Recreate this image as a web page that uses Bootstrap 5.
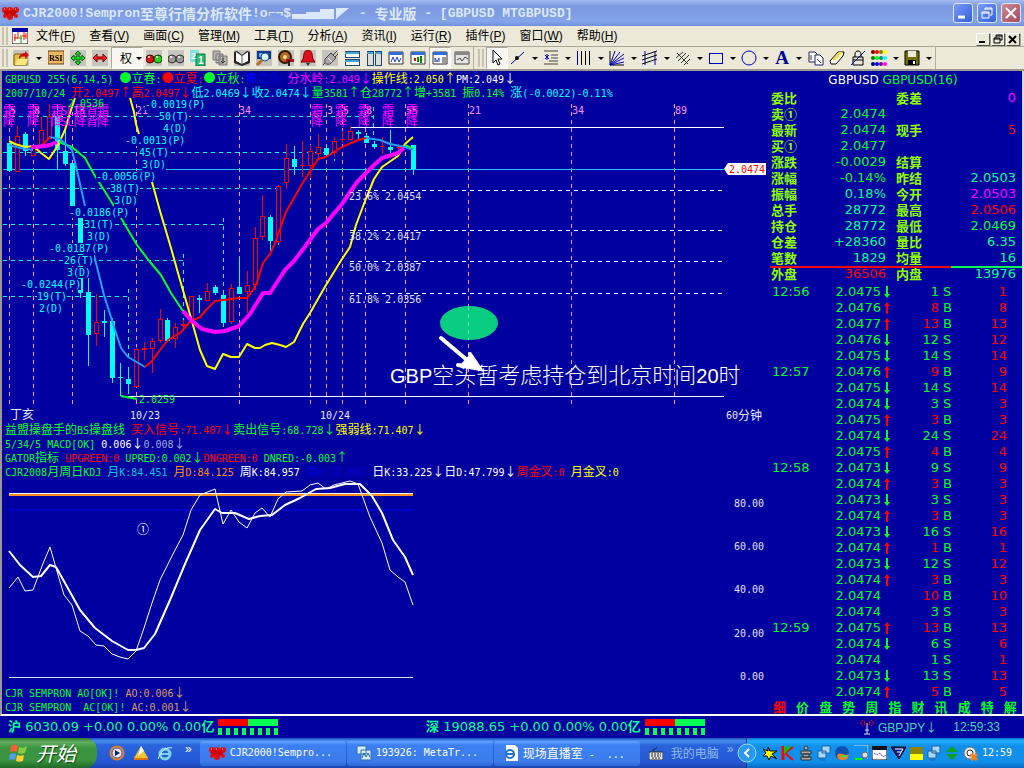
<!DOCTYPE html>
<html lang="zh-CN">
<head>
<meta charset="utf-8">
<meta name="viewport" content="width=device-width, initial-scale=1">
<title>CJR2000!Sempron - 专业版 - [GBPUSD MTGBPUSD]</title>
<link href="https://cdn.jsdelivr.net/npm/bootstrap@5.3.0/dist/css/bootstrap.min.css" rel="stylesheet">
<style>
:root{--navy:#0000a0;--face:#ece9d8;--lime:#00ff28;--leaf:#8cff00;--mint:#00ff8c;--hot:#ff0000;--pink:#ff00ff;--aqua:#00ffff}
body{font-family:"Liberation Sans","Noto Sans CJK SC",sans-serif;font-size:12px;line-height:14px;color:#000;background:var(--navy);min-height:100vh}
svg{display:block;flex-shrink:0}
button{padding:0;border:0;background:transparent;color:inherit;line-height:1}
.titlebar{height:26px;background:linear-gradient(#a4bcf0,#7b98e0 6px,#7f9de4 15px,#85a5ea 21px,#7090dc);color:#dce8fc;padding:0 3px 0 2px}
.titlebar h1{font:bold 13px "Liberation Mono","Noto Sans CJK SC",monospace;white-space:pre}
.titlebar .hz{font-size:14px}
.winbtn{width:20px;height:20px;border:1px solid #dfe8fb;border-radius:3px;background:linear-gradient(135deg,#7a9cf4,#2f5fe0)}
.winbtn.shut{background:linear-gradient(135deg,#d08a94,#a44a60)}
.menubar{height:21px;background:var(--face);padding-left:2px;border-bottom:1px solid #aca899}
.menubar a{color:#000;text-decoration:none;font-size:12px;line-height:16px;white-space:nowrap}
.grip{width:6px;height:18px;border-left:2px solid #c6c3b4;border-right:2px solid #c6c3b4}
.mdibtn{width:14px;height:13px;background:var(--face);border:1px solid;border-color:#fff #55534a #55534a #fff;box-shadow:1px 1px 0 #aca899}
.toolbar{height:24px;background:var(--face);border-bottom:2px solid #9c9a8e;padding-left:2px;gap:0}
.toolbar .grip{margin-right:2px}
.tool{width:22px;height:22px;display:flex;align-items:center;justify-content:center;flex-shrink:0}
.tool svg.gr{background:#c4c3bd}
.held{background:#f8f7f2;border:1px solid;border-color:#aca899 #fff #fff #aca899}
.draw{width:20px}
.drop{width:13px;height:22px;display:flex;align-items:center;justify-content:center;flex-shrink:0}
.drop::after{content:"";border:3px solid transparent;border-top-color:#000;border-bottom:0}
.work{border-left:2px solid #9c9a8e;border-bottom:2px solid #fff;color:var(--lime)}
.chart{min-width:0}
.mono{font-family:"DejaVu Sans Mono",monospace;font-size:10px;line-height:14px;height:14px;white-space:pre;padding-left:3px}
.hz{font-family:"Noto Sans CJK SC",sans-serif;font-size:12px;line-height:14px}
.c-r{color:var(--hot)}.c-g{color:var(--lime)}.c-m{color:var(--pink)}.c-c{color:var(--aqua)}.c-y{color:#ff0}.c-w{color:#fff}
.c-mint{color:var(--mint)}.c-o{color:#ff8c10}.c-t{color:#00c8d0}.c-l{color:#a8a8d8}.c-b{color:#0000d8}.c-n{color:#d8a060}
.chart svg{width:100%;height:auto;overflow:visible}
.chart svg text{font-family:"DejaVu Sans Mono",monospace;font-size:10px}
.chart svg text.hz{font-family:"Noto Sans CJK SC",sans-serif;font-size:12px}
.chart svg text.note{font-family:"Liberation Sans","Noto Sans CJK SC",sans-serif;font-size:20px}
.chart svg .note .big{font-size:22px;font-weight:300}
.quote{width:256px;flex-shrink:0;border-right:2px solid #d8d8e8;font-family:"DejaVu Sans","Noto Sans CJK SC",sans-serif;font-size:13px}
.quote h2{font-size:12px;line-height:19px;margin:0;padding-left:44px}
.quote table{width:100%;table-layout:fixed;border-collapse:collapse}
.quote td,.quote th{padding:0;height:16px;line-height:16px;white-space:nowrap}
.quote .facts th{color:var(--leaf);font:bold 13px/16px "Noto Sans CJK SC",sans-serif;padding-left:3px}
.quote .facts th+td+th{padding-left:9px}
.quote .facts td{padding-right:1px}
.quote .facts td:last-child{padding-right:6px}
.quote .ticks{margin-top:2px}
.ticks svg{margin-left:3px}
.quote .ticks td:first-child{padding-left:4px}
.quote .ticks td:last-child{padding-right:15px}
.facts tr:last-child{background:linear-gradient(90deg,#f00 72%,#00ff50 72%) no-repeat 2px 0/252px 2px}
.tabs button{font:bold 13px/14px "Noto Sans CJK SC",sans-serif;color:var(--lime)}
.tabs button.on{color:var(--hot)}
.status{height:22px;background:var(--navy);color:var(--mint);font-family:"DejaVu Sans","Noto Sans CJK SC",sans-serif;font-size:13px;white-space:nowrap}
.status .idx{width:418px}
.status .feed{color:#40d8b0;font-family:"Liberation Sans","Noto Sans CJK SC",sans-serif;font-size:12px}
.taskbar{height:30px;background:linear-gradient(#1c50c0,#4890f0 3px,#2a64dc 7px,#2458d4 24px,#1c44b0);color:#fff}
.start{width:97px;height:30px;border-radius:0 12px 12px 0;background:linear-gradient(#2c7c2c,#60b060 4px,#3c9440 10px,#3a9440 22px,#226a28);color:#fff}
.start span{font:italic 20px/24px "Noto Sans CJK SC",sans-serif;text-shadow:1px 1px 1px #124414}
.task{height:25px;flex:0 1 146px;border-radius:3px;background:linear-gradient(#68a4fc,#3c80f4 4px,#3c7cec 20px,#2c68d8);color:#fff;padding-left:9px;white-space:nowrap}
.task .mono,.tray .mono{padding:0}
.tray{height:30px;padding:0 12px 0 16px;background:linear-gradient(#0c70d0,#20b0f8 3px,#1090ec 8px,#1090ec 24px,#0c68c0);border-left:1px solid #083c90}
</style>
</head>
<body class="d-flex flex-column">

<header>
<div class="titlebar d-flex align-items-center">
  <svg width="17" height="14" viewBox="0 0 17 14" fill="#e01010"><circle cx="3" cy="4" r="3"/><circle cx="8" cy="4" r="3"/><circle cx="14" cy="4" r="3"/><circle cx="5" cy="7" r="3" fill="#c00"/><circle cx="11" cy="7" r="3" fill="#c00"/><circle cx="3" cy="10" r="2"/><circle cx="8" cy="11" r="3"/><circle cx="14" cy="10" r="2"/><path d="M2 3h1M7 3h1M13 3h1" stroke="#fcc"/></svg>
  <h1 class="m-0 ms-1 flex-grow-1 d-flex align-items-center"><span>CJR2000!Sempron</span><span class="hz">至尊行情分析软件</span><span>!o⌐¬$</span><svg width="60" height="14" viewBox="0 0 60 14" fill="#dce8fc"><path d="M1 8h14V6h14V3h14v10H1zM45 2h13L45 13z"/></svg><span> - </span><span class="hz">专业版</span><span> - [GBPUSD MTGBPUSD]</span></h1>
  <div class="d-flex gap-1">
    <button class="winbtn" aria-label="最小化"><svg width="18" height="18"><path d="M4 13h7" stroke="#fff" stroke-width="3"/></svg></button>
    <button class="winbtn" aria-label="还原"><svg width="18" height="18" fill="none" stroke="#fff"><path d="M7 6V4h7v7h-2M4 8h7v6H4zM4 9h7M7 5h7"/></svg></button>
    <button class="winbtn shut" aria-label="关闭"><svg width="18" height="18"><path d="M4 4l10 10M14 4L4 14" stroke="#fff" stroke-width="2"/></svg></button>
  </div>
</div>

<nav class="menubar d-flex align-items-center">
  <div class="grip me-1"></div>
  <svg class="me-2" width="16" height="16" viewBox="0 0 16 16"><path d="M0 0h16v16H0z" fill="#fff" stroke="#000"/><path d="M0 0h16v4H0z" fill="#0000a0"/><path d="M3 6v7M6 4v7M2 10h4" stroke="#f00" fill="none"/><path d="M9 7v8M7 10h3" stroke="#0a0" fill="none"/><path d="M12 4v8M14 5v6M10 8h4" stroke="#f00" fill="none"/></svg>
  <div class="d-flex flex-grow-1" style="gap:14px">
    <a href="#">文件(<u>F</u>)</a><a href="#">查看(<u>V</u>)</a><a href="#">画面(<u>C</u>)</a><a href="#">管理(<u>M</u>)</a><a href="#">工具(<u>T</u>)</a><a href="#">分析(<u>A</u>)</a><a href="#">资讯(<u>I</u>)</a><a href="#">运行(<u>R</u>)</a><a href="#">插件(<u>P</u>)</a><a href="#">窗口(<u>W</u>)</a><a href="#">帮助(<u>H</u>)</a>
  </div>
  <div class="d-flex align-self-end me-1" style="gap:1px">
    <button class="mdibtn" aria-label="最小化窗口"><svg width="12" height="11"><path d="M2 8h6" stroke="#000" stroke-width="2"/></svg></button>
    <button class="mdibtn" aria-label="还原窗口"><svg width="12" height="11" fill="none" stroke="#000"><path d="M4 4V1h6v5H8M2 4h6v5H2zM2 5h6M4 2h6"/></svg></button>
    <button class="mdibtn" aria-label="关闭窗口"><svg width="12" height="11"><path d="M2 2l7 7M9 2L2 9" stroke="#000" stroke-width="2"/></svg></button>
  </div>
</nav>

<div class="toolbar d-flex align-items-center" role="toolbar" aria-label="工具栏">
  <div class="grip"></div>
  <button class="tool" aria-label="打开"><svg class="gr" width="16" height="16"><path d="M1 5l2-1h5l1 2h5v9H1z" fill="#e8c040" stroke="#806000"/><path d="M2 15l2-6h11l-2 6z" fill="#ffe880"/><path d="M6 9c0-5 3-6 6-6V1l4 4-4 4V6c-3 0-4 1-6 3z" fill="#d01010"/></svg></button>
  <button class="drop" aria-label="打开选项"></button>
  <button class="tool" aria-label="RSI"><svg width="16" height="16"><path d="M0 1h16v13H0z" fill="#f4b860" stroke="#604020"/><text x="1" y="11" font-size="8" font-weight="bold" font-family="Liberation Serif">RSI</text></svg></button>
  <button class="tool" aria-label="移动"><svg class="gr" width="16" height="16"><path d="M8 1l3 3H9v3h3V5l3 3-3 3V9H9v3h2l-3 3-3-3h2V9H4v2L1 8l3-3v2h3V4H5z" fill="#20e020" stroke="#006000"/></svg></button>
  <button class="tool" aria-label="缩放"><svg class="gr" width="16" height="16"><path d="M1 8l4-4v3h6V4l4 4-4 4V9H5v3z" fill="#ff2020" stroke="#800000"/></svg></button>
  <button class="held d-flex align-items-center ps-2" style="width:32px;height:22px"><span class="hz">权</span><span class="drop"></span></button>
  <button class="tool" aria-label="红绿灯"><svg class="gr" width="16" height="16"><circle cx="4" cy="9" r="4" fill="#e01010" stroke="#400"/><circle cx="12" cy="9" r="4" fill="#30d020" stroke="#040"/><circle cx="3" cy="7" r="1" fill="#fff"/><circle cx="11" cy="7" r="1" fill="#fff"/></svg></button>
  <button class="tool" aria-label="灰灯"><svg class="gr" width="16" height="16"><circle cx="4" cy="9" r="4" fill="#989898" stroke="#333"/><circle cx="12" cy="9" r="4" fill="#989898" stroke="#333"/><circle cx="3" cy="7" r="1" fill="#fff"/><circle cx="11" cy="7" r="1" fill="#fff"/></svg></button>
  <button class="tool" aria-label="周期"><svg width="16" height="16"><path d="M0 0h9v12H0z" fill="#80e0e8"/><path d="M6 4h9v12H6z" fill="#20c070" stroke="#107040"/><text x="1" y="9" font-size="9" fill="#fff" font-weight="bold">2</text><text x="8" y="14" font-size="10" fill="#fff" font-weight="bold">1</text></svg></button>
  <button class="tool" aria-label="复制页"><svg width="16" height="16" fill="#b8b6ae" stroke="#777"><path d="M1 1h7v9H1zM4 4h7v9H4zM7 6h8v9H7z"/><path d="M11 8v5M9 11l2 2 2-2" stroke="#333"/></svg></button>
  <button class="tool" aria-label="手册"><svg class="gr" width="16" height="16"><path d="M0 2l3-1 5 4 5-4 3 1v11l-8 3-8-3z" fill="#222"/><path d="M2 2l6 4v8l-6-3zM14 2L8 6v8l6-3z" fill="#fff"/><path d="M8 5v10" stroke="#555"/></svg></button>
  <button class="tool" aria-label="查找"><svg class="gr" width="16" height="16"><path d="M1 1h14v8H1z" fill="#103890"/><path d="M3 3h9v4H3z" fill="#60b0e8"/><circle cx="9" cy="7" r="4" fill="#d8f4ff" stroke="#205090"/><path d="M6 10l-5 5" stroke="#c06820" stroke-width="3"/></svg></button>
  <button class="tool" aria-label="设置"><svg class="gr" width="16" height="16"><circle cx="7" cy="7" r="6" fill="#b06820" stroke="#301800" stroke-width="2"/><circle cx="7" cy="7" r="2" fill="#ffe080"/><path d="M8 9h8v3H8z" fill="#c00020"/><path d="M11 10v6" stroke="#222" stroke-width="2"/></svg></button>
  <button class="tool" aria-label="预警"><svg class="gr" width="16" height="16"><path d="M8 0c5 0 4 7 5 9l2 3H1l2-3C4 7 3 0 8 0z" fill="#e01020" stroke="#700"/><path d="M6 13h4l-2 3z" fill="#333"/></svg></button>
  <button class="tool" aria-label="连接"><svg class="gr" width="16" height="16"><path d="M1 15l4-4M11 5l4-4M13 7l3-3" stroke="#444"/><path d="M3 9l6-6 5 5-6 6c-4 1-6-1-5-5z" fill="#a8a8a8" stroke="#444"/><path d="M6 8l4 4" stroke="#fff"/></svg></button>
  <button class="tool" aria-label="横排"><svg width="16" height="16" fill="#fff" stroke="#184878" shape-rendering="crispEdges"><path d="M1 1h14v6H1zM1 9h14v6H1z"/><path d="M1 2h14v2H1zM1 10h14v2H1z" fill="#48a0d0" stroke="none"/></svg></button>
  <button class="tool" aria-label="竖排"><svg width="16" height="16" fill="#dcdcd4" stroke="#184878" shape-rendering="crispEdges"><path d="M1 1h6v14H1zM9 1h6v14H9z"/><path d="M1 2h6v2H1zM9 2h6v2H9z" fill="#48a0d0" stroke="none"/></svg></button>
  <button class="tool" aria-label="走势图"><svg width="16" height="16"><path d="M1 2h14v12H1z" fill="#fff" stroke="#333"/><path d="M1 2h14v3H1z" fill="#3070d0"/><path d="M3 12l2-5 2 5 2-5 2 5 2-4" stroke="#2040c0" fill="none"/></svg></button>
  <button class="tool" aria-label="K线图"><svg width="16" height="16"><path d="M1 2h14v12H1z" fill="#fff" stroke="#333"/><path d="M1 2h14v3H1z" fill="#3070d0"/><path d="M4 8h2v3H4z" fill="#e00"/><path d="M11 6v7M8 7v5" stroke="#080" stroke-width="2"/></svg></button>
  <button class="tool held" aria-label="组合图"><svg width="16" height="16"><path d="M1 2h14v12H1z" fill="#fff" stroke="#333"/><path d="M1 2h14v3H1z" fill="#3070d0"/><path d="M3 12V8l2 4 2-4v4" stroke="#2040c0" fill="none"/><path d="M10 8h4M10 10h4M10 12h4" stroke="#333"/></svg></button>
  <button class="tool" aria-label="指标图"><svg width="16" height="16"><path d="M1 2h14v12H1z" fill="#e4e4e0" stroke="#444"/><path d="M1 2h14v3H1z" fill="#888"/><path d="M3 10l3-2 2 3 3-4 3 2" stroke="#444" fill="none"/></svg></button>
  <div class="vr me-1"></div>
  <div class="grip"></div>
  <button class="tool held" aria-label="选择"><svg width="16" height="18"><path d="M4 1v13l3-3 2 5 2-1-2-5h4z" fill="#fff" stroke="#000"/></svg></button>
  <button class="tool draw" aria-label="直线"><svg width="16" height="16"><path d="M1 14L14 2" stroke="#0000c0"/><circle cx="7" cy="8" r="2"/></svg></button><button class="drop" aria-label="直线选项"></button>
  <button class="tool draw" aria-label="标注"><svg width="16" height="16"><path d="M1 1h14M1 14h14M8 5h7M8 8h7M6 11h9" stroke="#444"/><path d="M2 5l4 4M6 5L2 9M4 4v6" stroke="#00c"/></svg></button><button class="drop" aria-label="标注选项"></button>
  <button class="tool draw" aria-label="周期线"><svg width="16" height="16" shape-rendering="crispEdges"><path d="M5 1v14M9 1v14M13 1v14" stroke="#000"/><path d="M1 1v14" stroke="#00c"/></svg></button><button class="drop" aria-label="周期线选项"></button>
  <button class="tool draw" aria-label="扇形线"><svg width="16" height="16"><path d="M1 1v14h14" stroke="#000" fill="none"/><path d="M1 15L6 1M1 15L11 2M1 15L15 4M1 15L15 8M1 15l14-3" stroke="#0000c0"/></svg></button><button class="drop" aria-label="扇形线选项"></button>
  <button class="tool draw" aria-label="通道线"><svg width="16" height="16"><path d="M3 1v14M13 1v14" stroke="#00c"/><path d="M0 6l15-5M0 10l15-5M0 14l15-5" stroke="#000"/></svg></button><button class="drop" aria-label="通道线选项"></button>
  <button class="tool draw" aria-label="平行线"><svg width="16" height="16" stroke="#333"><path d="M1 8l7-6M3 11l8-8M6 13l8-8M9 15l6-6M2 3l11 11"/></svg></button><button class="drop" aria-label="平行线选项"></button>
  <button class="tool draw" aria-label="矩形"><svg width="16" height="16" shape-rendering="crispEdges"><path d="M1 3h13v10H1z" fill="none" stroke="#0000c0"/></svg></button><button class="drop" aria-label="矩形选项"></button>
  <button class="tool draw" aria-label="圆形"><svg width="16" height="16"><circle cx="8" cy="8" r="7" fill="none" stroke="#0000c0"/></svg></button><button class="drop" aria-label="圆形选项"></button>
  <button class="tool draw" aria-label="文字" style="color:#000090;font:bold 19px 'Liberation Serif',serif">A</button><button class="drop" aria-label="文字选项"></button>
  <button class="tool" aria-label="复制"><svg width="16" height="16" fill="#fff" stroke="#202060"><path d="M1 2h6l2 2v8H1z"/><path d="M7 5h5l3 3v7H7z"/><path d="M3 5v5M9 9l4 4" stroke="#333"/></svg></button>
  <button class="tool draw" aria-label="擦除"><svg width="16" height="16"><path d="M1 11l8-9h6l-1 4-7 8H2z" fill="#fff" stroke="#000"/><path d="M3 10l7-8h4l-7 8z" fill="#f0e040"/></svg></button>
  <button class="tool" aria-label="锁定"><svg width="16" height="16" fill="none" stroke="#000"><path d="M5 7V4c0-4 6-4 6 0v3M3 7h10v8H3zM3 10h10"/><path d="M1 15L15 1" stroke="#00c"/></svg></button>
  <button class="tool draw" aria-label="颜色"><svg width="18" height="16"><g id="dots"></g></svg></button><button class="drop" aria-label="颜色选项"></button>
  <button class="tool draw" aria-label="保存"><svg width="16" height="16"><path d="M1 1h14v14H1z" fill="#707000" stroke="#000"/><path d="M4 1h8v6H4z" fill="#e8e8e0"/><path d="M4 10h8v5H4z" fill="#000"/><path d="M9 11h2v3H9z" fill="#fff"/></svg></button><button class="drop" aria-label="保存选项"></button>
  <div class="vr"></div>
</div>
</header>

<main class="work d-flex flex-grow-1">
<section class="chart flex-grow-1 d-flex flex-column">
  <div class="mono">GBPUSD 255(6,14,5) <span class="hz">●立春</span>:<span class="c-r"><span class="hz">●立夏</span>:</span><span class="hz">●立秋</span>:<span class="c-b"><span class="hz">●立冬</span> </span><span class="c-m"><span class="hz">分水岭</span>:2.049<span class="hz">↓</span></span><span class="c-y"><span class="hz">操作线</span>:2.050<span class="hz">↑</span></span><span class="c-w">PM:2.049<span class="hz">↓</span></span></div>
  <div class="mono">2007/10/24 <span class="c-r"><span class="hz">开</span>2.0497<span class="hz">↑高</span>2.0497<span class="hz">↓</span></span><span class="c-c"><span class="hz">低</span>2.0469<span class="hz">↓收</span>2.0474<span class="hz">↓</span></span><span class="hz">量</span>3581<span class="hz">↑仓</span>28772<span class="hz">↑增</span>+3581 <span class="hz">振</span>0.14% <span class="c-c"><span class="hz">涨</span>(-0.0022)-0.11%</span></div>
  <svg viewBox="2 99 766 323" role="img" aria-label="GBPUSD K线图">
    <g stroke="#ff90ff" stroke-dasharray="4 4" shape-rendering="crispEdges"><path d="M9.500 104V407M33.500 104V407M72.500 104V407M136.500 104V407M239.500 104V407M310.500 104V407M326.500 104V407M342.500 104V407M365.500 104V407M405.500 104V407M468.500 104V407M571.500 104V407M674.500 104V407"/></g>
    <g stroke="#00ffff" stroke-dasharray="4 4" fill="none" shape-rendering="crispEdges"><path d="M3 116.500H373.500M373.500 107V136M3 152.500H334.500M334.500 143V161M3 188.500H278.500V248M3 224.500H223.500M223.500 218V295M3 260.500H183.500M183.500 254V322M3 296.500H128.500M128.500 289V360"/></g>
    <g fill="none" shape-rendering="crispEdges"><path d="M3 169.500H724" stroke="#20c8ff"/><path d="M350 127.500H724M128 396.500H724" stroke="#fff"/><path d="M350 190.500H724M350 230.500H724M350 261.500H724M350 293.500H724" stroke="#fff" stroke-dasharray="4 4"/></g>
    <g id="candles" shape-rendering="crispEdges"></g>
    <g fill="none" stroke-width="2" stroke-linejoin="round">
      <path stroke="#ff0" d="M9 141l6 3 10 3 8-1 8 7 8 6 8-12 8-17 5-17 5-15M130 98l4 14 2 12 3 10M152 182l8 29 11 37 9 32 11 38 9 32 7 16 8 3 8-15 8 3h8l8-13 8 4h5l5-3 7-2 8 2 6 2 8-5 9-18 7-11 16-28 16-26 8-12 6-22 9-24 9-22 8-12 16-11 7-12 8-7"/>
      <path stroke="#00ff28" d="M59 142l13 5 13 11 10 18 9 14 10 16M121 218l16 27 13 17 11 13 10 18 12 18M405 145l8 4M121 396l16 3"/>
      <path stroke="#20a0f8" d="M9 145l11 3 13 2M49 137l11 2 12 11 6 25 7 31M94 255l10 40 11 35 6 18 7 9 17 10M366 138l14 2 10 4 15 3 8 3"/>
      <path stroke="#f00" d="M41 146l9-9M145 367l7-6 8-11 8-10 12-7 10-11 10-5 7-8 8-8 24-3h8l6-8 4-8 6-19 7-9 5-11 11-31 16-28 16-25 8-2 16-10 16-7 8-2"/>
      <path stroke="#f0f" stroke-width="4" d="M31 147h6l13-2 7-3M183 311l9 10 10 8 13 3 10-1 14-5 11-12 13-21h7l15-23 9-9 10-13 14-19 8-6 16-19 15-22 17-17 8-7 16-5 6-5"/>
    </g>
    <g fill="#ff90ff"><text x="10" y="114">5</text><text x="34" y="114">8</text><text x="73" y="114">13</text><text x="136" y="114">21</text><text x="239" y="114">34</text><text x="327" y="114">3</text><text x="343" y="114">5</text><text x="366" y="114">8</text><text x="406" y="114">55</text><text x="469" y="114">21</text><text x="572" y="114">34</text><text x="675" y="114">89</text></g>
    <g fill="#ff00ff" id="terms"></g>
    <text x="68" y="107" fill="#00ff28">2.0536</text><text x="139" y="403" fill="#00ff28">2.0259</text>
    <g id="swings"></g>
    <g fill="#e0e0f0"><text x="349" y="200">23.6% 2.0454</text><text x="349" y="240">38.2% 2.0417</text><text x="349" y="271">50.0% 2.0387</text><text x="349" y="303">61.8% 2.0356</text></g>
    <path d="M724 169l4-6h38v12h-38z" fill="#fff"/><text x="729" y="173" fill="#f00">2.0474</text>
    <ellipse cx="469" cy="323" rx="29" ry="17" fill="#08cc80"/><path d="M468.500 306v34" stroke="#60e8b0" stroke-dasharray="4 4"/>
    <path d="M441 338l32 27M470 354l10 15-22-4" stroke="#fff" stroke-width="4" stroke-linecap="round" fill="none"/><path d="M470 354l12 16-22-5z" fill="#fff"/>
    <text class="note" x="390" y="383" fill="#fff">GBP<tspan class="big">空头暂考虑持仓到北京时间</tspan>20<tspan class="big">时</tspan></text>
    <text class="hz" x="10" y="419" fill="#e8e8ff">丁亥</text><g fill="#e8e8ff"><text x="130" y="419">10/23</text><text x="320" y="419">10/24</text><text x="726" y="419">60</text><text class="hz" x="738" y="420">分钟</text></g>
  </svg>
  <div class="mono"><span class="hz">益盟操盘手的</span>BS<span class="hz">操盘线</span> <span class="c-r"><span class="hz">买入信号</span>:71.407<span class="hz">↓</span></span><span class="hz">卖出信号</span>:68.728<span class="hz">↓</span><span class="c-y"><span class="hz">强弱线</span>:71.407<span class="hz">↓</span></span></div>
  <div class="mono">5/34/5 MACD[OK] <span class="c-w">0.006<span class="hz">↓</span></span><span class="c-l">0.008<span class="hz">↓</span></span></div>
  <div class="mono">GATOR<span class="hz">指标</span> <span class="c-r">UPGREEN:0</span> UPRED:0.002<span class="hz">↓</span><span class="c-r">DNGREEN:0</span> DNRED:-0.003<span class="hz">↑</span></div>
  <div class="mono">CJR2008<span class="hz">月周日</span>KDJ <span class="c-t"><span class="hz">月</span>K:84.451</span> <span class="c-o"><span class="hz">月</span>D:84.125</span> <span class="c-w"><span class="hz">周</span>K:84.957</span> <span class="c-b"><span class="hz">周</span>D:77.007</span> <span class="c-w"><span class="hz">日</span>K:33.225<span class="hz">↓日</span>D:47.799<span class="hz">↓</span></span><span class="c-r"><span class="hz">周金叉</span>:0</span> <span class="c-y"><span class="hz">月金叉</span>:0</span></div>
  <svg viewBox="2 478 766 207" role="img" aria-label="KDJ 指标">
    <g shape-rendering="crispEdges"><path d="M9 493h404v1H9z" fill="#fff"/><path d="M9 494h404v2H9z" fill="#ff8c20"/><path d="M9 509h404v2H9z" fill="#0000c8"/><path d="M9 677h404v1H9z" fill="#d8d8e8"/></g>
    <g fill="none" stroke="#fff" stroke-linejoin="round">
    <polyline stroke-width="2" points="9,551 20,565 33,577 41,576 50,565 56,567 65,583 80,610 95,628 112,641 128,650 136,650 144,648 155,634 170,600 185,564 200,530 215,509 222,513 235,513 249,519 260,516 272,515 285,505 300,498 316,489 330,488 345,484 360,484 372,496 382,513 393,540 405,557 413,575"/>
    <polyline points="9,588 18,577 25,591 33,590 42,566 50,547 56,568 64,595 72,605 80,631 88,636 96,645 104,646 112,654 120,657 128,659 136,651 144,628 152,603 160,580 174,552 183,535 191,510 200,495 215,489 223,524 231,510 239,522 247,528 255,513 262,508 270,517 278,499 286,492 302,491 310,485 318,483 326,489 334,485 350,481 358,484 370,517 382,543 390,570 398,577 405,582 413,605"/></g>
    <text class="hz" x="137" y="534" fill="#fff">①</text>
    <g fill="#e0e0f0" text-anchor="end"><text x="764" y="507">80.00</text><text x="764" y="550">60.00</text><text x="764" y="593">40.00</text><text x="764" y="637">20.00</text><text x="764" y="680">0.00</text></g>
  </svg>
  <div class="mono">CJR SEMPRON AO[OK]! <span class="c-n">AO:0.006<span class="hz">↓</span></span></div>
  <div class="mono">CJR SEMPRON  AC[OK]! <span class="c-n">AC:0.001<span class="hz">↓</span></span></div>
</section>

<aside class="quote d-flex flex-column">
  <h2 class="text-center pe-5 text-nowrap"><span class="c-w">GBPUSD</span> GBPUSD(16)</h2>
  <table class="facts"><colgroup><col style="width:55px"><col style="width:64px"><col style="width:50px"><col></colgroup><tbody id="facts"></tbody></table>
  <table class="ticks"><colgroup><col style="width:55px"><col style="width:58px"><col style="width:12px"><col style="width:46px"><col style="width:16px"><col></colgroup><tbody id="ticks"></tbody></table>
  <div class="tabs d-flex justify-content-around mt-auto" role="tablist"><button class="on">细</button><button>价</button><button>盘</button><button>势</button><button>周</button><button>指</button><button>财</button><button>讯</button><button>成</button><button>特</button><button>解</button></div>
</aside>
</main>

<footer>
<div class="status d-flex align-items-center">
  <div class="idx d-flex align-items-center gap-1 ms-2"><span><b>沪</b> 6030.09 +0.00 0.00% 0.00<b>亿</b></span><svg width="60" height="16" shape-rendering="crispEdges"><path d="M0 0h30v7H0z" fill="#f00"/><path d="M30 0h30v7H30z" fill="#00ff50"/><path d="M0 12h60" stroke="#00ff50" stroke-width="7" stroke-dasharray="4 4"/></svg></div>
  <div class="d-flex align-items-center gap-1 flex-grow-1"><span><b>深</b> 19088.65 +0.00 0.00% 0.00<b>亿</b></span><svg width="60" height="16" shape-rendering="crispEdges"><path d="M0 0h30v7H0z" fill="#f00"/><path d="M30 0h30v7H30z" fill="#00ff50"/><path d="M0 12h60" stroke="#00ff50" stroke-width="7" stroke-dasharray="4 4"/></svg></div>
  <div class="feed d-flex align-items-center me-4"><svg class="me-1" width="14" height="16" fill="none" stroke="#f00"><path d="M3 1c-3 2-3 4 0 6M11 1c3 2 3 4 0 6M5 2c-1 1-1 3 0 4M9 2c1 1 1 3 0 4"/><path d="M7 4v11M4 15h6M5 11h4" stroke="#ddd"/></svg><span class="me-3">GBPJPY<span class="hz">↓</span></span><span>12:59:33</span></div>
</div>
<div class="taskbar d-flex align-items-center">
  <button class="start d-flex align-items-center gap-2 ps-2 flex-shrink-0"><svg width="20" height="20"><path d="M3 3c3-2 5-1 7 0L9 9c-3-1-5-1-7 0z" fill="#f06030"/><path d="M11 4c3 1 5 1 8-1l-2 7c-3 1-5 1-7 0z" fill="#80d040"/><path d="M2 11c3-1 5-1 6 0l-1 6c-2-1-4-1-6 0z" fill="#50a0f0"/><path d="M9 12c3 1 5 1 7 0l-1 6c-3 1-5 1-7 0z" fill="#ffd030"/></svg><span>开始</span></button>
  <div class="d-flex align-items-center gap-2 ms-2 ps-1 me-2 flex-shrink-0">
    <svg width="16" height="16"><circle cx="8" cy="8" r="6" fill="#fff" stroke="#e08030" stroke-width="3"/><circle cx="8" cy="8" r="5" fill="#e8f0ff" stroke="#3060c0"/><path d="M6 5l5 3-5 3z" fill="#102060"/></svg>
    <svg width="16" height="16"><path d="M8 1l7 12H1z" fill="#f8c030"/><path d="M8 1l3 5-6 5z" fill="#fff"/><path d="M1 14h14" stroke="#e07010" stroke-width="2"/></svg>
    <svg width="16" height="16"><circle cx="8" cy="9" r="5" fill="none" stroke="#80d0ff" stroke-width="3"/><path d="M4 9h9" stroke="#80d0ff" stroke-width="2"/><path d="M1 14C3 7 10 1 15 3" stroke="#c8ecff" fill="none"/></svg>
    <span class="mb-2 ms-1">»</span>
  </div>
  <div class="d-flex flex-grow-1" style="gap:1px">
    <button class="task d-flex align-items-center gap-1"><svg width="17" height="14" viewBox="0 0 17 14" fill="#e01010"><circle cx="3" cy="4" r="3"/><circle cx="8" cy="4" r="3"/><circle cx="14" cy="4" r="3"/><circle cx="5" cy="7" r="3" fill="#c00"/><circle cx="11" cy="7" r="3" fill="#c00"/><circle cx="3" cy="10" r="2"/><circle cx="8" cy="11" r="3"/><circle cx="14" cy="10" r="2"/><path d="M2 3h1M7 3h1M13 3h1" stroke="#fcc"/></svg><span class="mono">CJR2000!Sempro...</span></button>
    <button class="task d-flex align-items-center gap-1"><svg width="16" height="16"><path d="M1 1h9v8H1zM5 5h10v10H5z" fill="#d8ecff" stroke="#3070b0"/><path d="M6 13l2-5 2 4 2-4 2 4" stroke="#206080" fill="none"/></svg><span class="mono">193926: MetaTr...</span></button>
    <button class="task d-flex align-items-center gap-1"><svg width="16" height="16"><path d="M3 0h9l3 3v13H3z" fill="#fff"/><circle cx="7" cy="9" r="4" fill="none" stroke="#2070d0" stroke-width="2"/><path d="M3 9h8" stroke="#2070d0" stroke-width="2"/></svg><span class="mono"><span class="hz">现场直播室</span> - &nbsp;...</span></button>
    <span class="d-flex align-items-center gap-2 ps-2 text-nowrap" style="color:#90b8f0"><svg width="14" height="14"><path d="M0 6h14v8H0z" fill="#e8e8e8" stroke="#222"/><path d="M2 8h10M2 10h10M3 12h8" stroke="#222" stroke-dasharray="2 1"/><path d="M4 5c0-4 2 0 4-4" stroke="#222" fill="none"/></svg><span class="hz">我的电脑</span><span class="mb-2">»</span></span>
  </div>
  <div class="tray d-flex align-items-center gap-1 position-relative flex-shrink-0">
    <svg class="position-absolute top-50 start-0 translate-middle" width="20" height="20"><circle cx="10" cy="10" r="9" fill="#2898f0" stroke="#a0d8ff"/><path d="M12 6l-4 4 4 4" stroke="#fff" stroke-width="2" fill="none"/></svg>
    <svg width="14" height="14"><path d="M0 3l5 2V1l2 4h7L9 8l5 5-6-3-2 4-2-4H0l3-3z" fill="#ff0" stroke="#000"/></svg>
    <svg width="14" height="16"><path d="M2 1v14" stroke="#f00" stroke-width="3"/><path d="M12 2L4 8l8 7" stroke="#f00" stroke-width="2" fill="none"/><path d="M4 1v6l5-6" stroke="#0c0" stroke-width="2" fill="none"/></svg>
    <svg width="14" height="16" fill="#aaa" stroke="#333"><circle cx="7" cy="3" r="2"/><path d="M2 6h10v3H2zM4 9h6v3H4zM2 12h10v3H2z"/></svg>
    <svg width="14" height="16" fill="#a8d8f8" stroke="#2060a0"><path d="M5 1h8v7H5zM1 6h8v7H1zM3 15h5"/></svg>
    <svg width="15" height="15"><circle cx="7" cy="7" r="7" fill="#1050b0"/><path d="M2 9c4-4 7 2 12-1-1 5-3 6-7 6-3 0-5-2-5-5z" fill="#f08020"/><path d="M6 11c2-2 4 0 6-1" stroke="#40e040" stroke-width="2" fill="none"/></svg>
    <svg width="14" height="16"><path d="M0 0h14v14" stroke="#ddd" fill="none"/><path d="M1 14h7" stroke="#0f0" stroke-width="2"/><circle cx="11" cy="10" r="3" fill="#ddd" stroke="#666"/></svg>
    <svg width="15" height="14"><path d="M0 0h15v14H0z" fill="#fff" stroke="#000"/><path d="M0 0h15v4H0z" fill="#111"/><path d="M2 7l3 2 3-2 3 4 3-2" stroke="#44a" fill="none" stroke-dasharray="2 1"/></svg>
    <svg width="15" height="14"><path d="M0 1h15L8 13z" fill="#102080" stroke="#001"/><path d="M4 3h8L8 10M6 6h4" stroke="#fff" fill="none"/></svg>
    <svg width="13" height="13"><path d="M0 0h13v13H0z" fill="#ff0"/><path d="M0 0h13v7H0z" fill="#8c8400"/></svg>
    <svg width="14" height="16" fill="#a8d8f8" stroke="#2060a0"><path d="M5 1h8v7H5zM1 6h8v7H1zM3 15h5"/></svg>
    <svg width="14" height="16" fill="#10a020"><path d="M7 1l6 6H1zM7 15l6-6H1z"/></svg>
    <svg width="15" height="15"><circle cx="7" cy="7" r="6" fill="#e8e8e8" stroke="#777"/><circle cx="7" cy="7" r="3" fill="#fff" stroke="#333"/><path d="M8 8l6 6M14 8l-6 6" stroke="#f08020" stroke-width="3"/></svg>
    <span class="mono">12:59</span>
  </div>
</div>
</footer>

<script src="https://cdn.jsdelivr.net/npm/bootstrap@5.3.0/dist/js/bootstrap.bundle.min.js"></script>
<script>
const put = (id, html) => document.getElementById(id).innerHTML = html;

// palette swatches
const hues = ['#800000','#f00','#808000','#ff0','#008000','#0f0','#008080','#0ff','#000080','#00f','#800080','#f0f'];
put('dots', hues.map((c,i)=>`<circle cx="${3+i%4*4}" cy="${2+Math.floor(i/4)*6}" r="2" fill="${c}"/>`).join(''));

// candles: x, wick top, body top, body bottom, wick bottom, up?
const bars = [[9,143,143,171,171,0],[17,126,136,172,172,1],[25,132,134,151,156,0],[33,145,145,156,156,1],[41,117,130,146,146,1],[49,104,116,139,139,1],[57,105,116,150,169,0],[65,130,151,164,166,0],[72,163,163,206,206,0],[80,218,218,293,298,0],[88,278,292,335,366,0],[96,294,322,334,346,1],[104,310,321,323,337,0],[112,318,321,378,383,0],[120,363,377,378,396,0],[128,367,379,384,394,0],[136,347,349,387,387,1],[144,342,348,350,360,1],[152,338,341,349,373,1],[160,309,319,341,343,1],[167,318,320,341,342,0],[175,323,327,339,348,1],[183,320,324,326,330,1],[191,296,296,321,321,1],[199,295,298,300,313,0],[207,283,291,301,301,1],[215,285,287,293,295,0],[223,291,295,323,327,0],[231,284,288,322,324,1],[239,257,287,294,294,0],[247,271,285,292,313,1],[255,227,238,285,290,1],[262,195,216,237,240,1],[270,215,217,241,251,0],[278,185,186,242,243,1],[286,144,158,183,189,1],[294,146,159,167,175,0],[302,141,165,166,177,1],[310,145,151,166,178,1],[318,134,147,154,158,1],[326,145,148,155,155,0],[334,137,141,153,156,1],[342,131,139,140,143,1],[350,126,131,140,140,1],[358,130,132,134,139,0],[366,133,136,143,143,0],[374,141,144,147,149,0],[382,137,146,147,154,1],[390,130,147,150,153,0],[398,144,147,148,150,1],[413,145,145,169,175,0]];
put('candles', bars.map(([x,t,a,b,w,up])=>{
  const c = up ? '#f00' : '#0ff';
  return `<rect x="${x}" y="${t}" width="1" height="${w-t}" fill="${c}"/><rect x="${x-2}" y="${a}" width="5" height="${b-a}" fill="${c}"/>` +
    (up && b-a>3 ? `<rect x="${x-1}" y="${a+1}" width="3" height="${b-a-2}" fill="#0000a0"/>` : '');
}).join(''));

// solar term marks
const marks = [[3,'霜','降'],[27,'霜','降'],[51,'霜','降'],[60,'S','S'],[67,'L','L'],[74,'霜','降'],[86,'背','背'],[97,'霜','降'],[311,'霜','降'],[335,'霜','降'],[358,'霜','降'],[382,'霜','降'],[406,'霜','降']];
put('terms', marks.map(([x,a,b])=>`<text class="hz" x="${x}" y="115">${a}</text><text class="hz" x="${x}" y="126">${b}</text>`).join(''));

// swing labels
const swings = [[145,104,'-0.0019(P)'],[159,116,'50(T)'],[163,128,'4(D)'],[125,140,'-0.0013(P)'],[139,152,'45(T)'],[142,164,'3(D)'],[96,176,'-0.0056(P)'],[110,188,'38(T)'],[114,200,'3(D)'],[69,212,'-0.0186(P)'],[84,224,'31(T)'],[87,236,'3(D)'],[49,248,'-0.0187(P)'],[64,260,'26(T)'],[67,272,'3(D)'],[21,284,'-0.0244(P)'],[37,296,'19(T)'],[39,308,'2(D)']];
put('swings', swings.map(([x,y,s])=>`<rect x="${x}" y="${y-5}" width="${s.length*6}" height="11" fill="#0000a0"/><text x="${x}" y="${y+4}" fill="#0ff">${s}</text>`).join(''));

const facts = [['委比','','','委差','0','m'],['卖①','2.0474','g','','',''],['最新','2.0474','g','现手','5','r'],['买①','2.0477','g','','',''],['涨跌','-0.0029','g','结算','',''],['涨幅','-0.14%','g','昨结','2.0503','mint'],['振幅','0.18%','mint','今开','2.0503','m'],['总手','28772','mint','最高','2.0506','r'],['持仓','28772','mint','最低','2.0469','g'],['仓差','+28360','mint','量比','6.35','mint'],['笔数','1829','mint','均量','16','mint'],['外盘','36506','r','内盘','13976','mint']];
put('facts', facts.map(f=>`<tr><th>${f[0]}</th><td class="text-end c-${f[2]}">${f[1]}</td><th>${f[3]}</th><td class="text-end c-${f[5]}">${f[4]}</td></tr>`).join(''));

const ticks = '12:56 75 - 1,76 + 8,77 + 13,76 - 12,75 - 14,12:57 76 + 9,75 - 14,74 - 3,75 + 3,74 - 24,75 + 4,12:58 73 - 9,74 + 3,73 - 3,74 + 3,73 - 16,74 + 1,73 - 12,74 + 3,74 =B 10,74 =S 3,12:59 75 + 13,74 - 6,74 =S 1,73 - 13,74 + 5'.split(',');
put('ticks', ticks.map(t=>{
  const v = t.split(' '), n = v.pop(), d = v.pop(), p = v.pop(), buy = d=='+'||d=='=B';
  const arrow = d=='+' ? '<svg width="7" height="12"><path d="M3 0l3 4H4v8H2V4H0z" fill="#f00"/></svg>' : d=='-' ? '<svg width="7" height="12"><path d="M3 12l3-4H4V0H2v8H0z" fill="#00ff28"/></svg>' : '';
  return `<tr><td>${v[0]||''}</td><td class="text-end">2.04${p}</td><td>${arrow}</td><td class="text-end ${buy?'c-r':''}">${n}</td><td class="ps-1">${buy?'B':'S'}</td><td class="text-end c-r">${n}</td></tr>`;
}).join(''));
</script>
</body>
</html>
